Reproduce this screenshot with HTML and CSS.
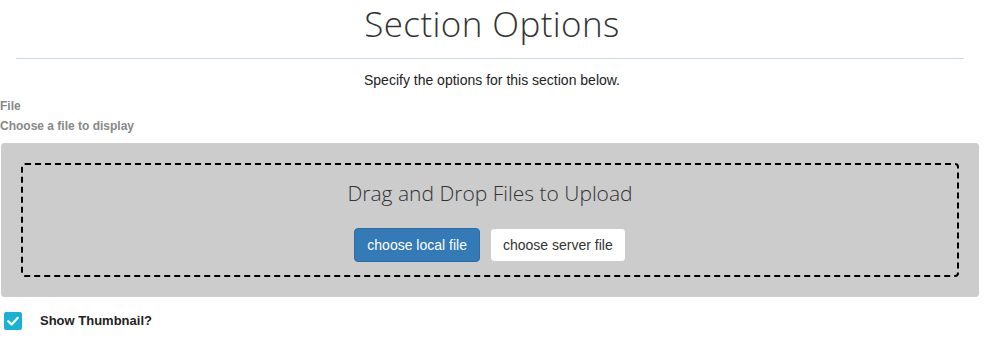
FILE: index.html
```html
<!DOCTYPE html>
<html>
<head>
<meta charset="utf-8">
<link rel="stylesheet" href="styles.css">
</head>
<body>
<div class="page">
  <h1 class="title">Section Options</h1>
  <div class="rule"></div>
  <p class="subtitle">Specify the options for this section below.</p>
  <div class="label">File</div>
  <div class="label label-help">Choose a file to display</div>
  <div class="dropzone">
    <div class="dropzone-inner">
      <div class="drop-text">Drag and Drop Files to Upload</div>
      <div class="buttons">
        <button class="btn btn-primary">choose local file</button>
        <button class="btn btn-default">choose server file</button>
      </div>
    </div>
  </div>
  <label class="check-row">
    <span class="checkbox">
      <svg width="18" height="18" viewBox="0 0 18 18"><path d="M4.2 9.2 L7.6 12.4 L13.8 5.8" fill="none" stroke="#fff" stroke-width="2.2" stroke-linecap="round" stroke-linejoin="round"/></svg>
    </span>
    <span class="check-label">Show Thumbnail?</span>
  </label>
</div>
</body>
</html>
```
FILE: styles.css
```css
html, body {
  margin: 0;
  padding: 0;
  background: #fff;
}
body {
  font-family: "Liberation Sans", Arial, sans-serif;
  color: #333;
}
.page {
  width: 984px;
}
.title {
  margin: 0;
  padding-top: 0;
  height: 58px;
  line-height: 47px;
  font-family: "Open Sans", sans-serif;
  font-weight: 300;
  font-size: 35px;
  letter-spacing: 0.4px;
  text-align: center;
  color: #333;
}
.rule {
  margin: 0 20px 0 16px;
  border-top: 1px solid #cddde6;
}
.subtitle {
  margin: 11px 0 0;
  font-size: 14px;
  line-height: 20px;
  text-align: center;
  color: #222;
}
.label {
  margin-top: 8px;
  font-size: 12px;
  line-height: 16px;
  font-weight: bold;
  color: #888;
}
.label-help {
  margin-top: 4px;
}
.dropzone {
  margin: 9px 0 0 1px;
  width: 938px;
  padding: 20px;
  background: #cccccc;
  border-radius: 4px;
}
.dropzone-inner {
  border: 2px dashed #000;
  border-radius: 4px;
  padding: 13px 0 13px;
  text-align: center;
}
.drop-text {
  font-family: "Open Sans", sans-serif;
  font-weight: 300;
  font-size: 21px;
  line-height: 30px;
  color: #333;
}
.buttons {
  margin-top: 20px;
  display: flex;
  justify-content: center;
  gap: 10px;
}
.btn {
  font-family: "Liberation Sans", Arial, sans-serif;
  font-size: 14px;
  line-height: 20px;
  padding: 6px 12px;
  border: 1px solid transparent;
  border-radius: 4px;
  cursor: pointer;
}
.btn-primary {
  background: #337ab7;
  border-color: #2e6da4;
  color: #fff;
}
.btn-default {
  background: #fff;
  border-color: #ccc;
  color: #333;
}
.check-row {
  display: flex;
  align-items: center;
  margin-top: 15px;
  padding-left: 4px;
  height: 18px;
}
.checkbox {
  width: 18px;
  height: 18px;
  background: #1ab2d4;
  border-radius: 2px;
  display: flex;
}
.check-label {
  margin-left: 18px;
  font-size: 13px;
  line-height: 18px;
  font-weight: bold;
  color: #222;
}
```
